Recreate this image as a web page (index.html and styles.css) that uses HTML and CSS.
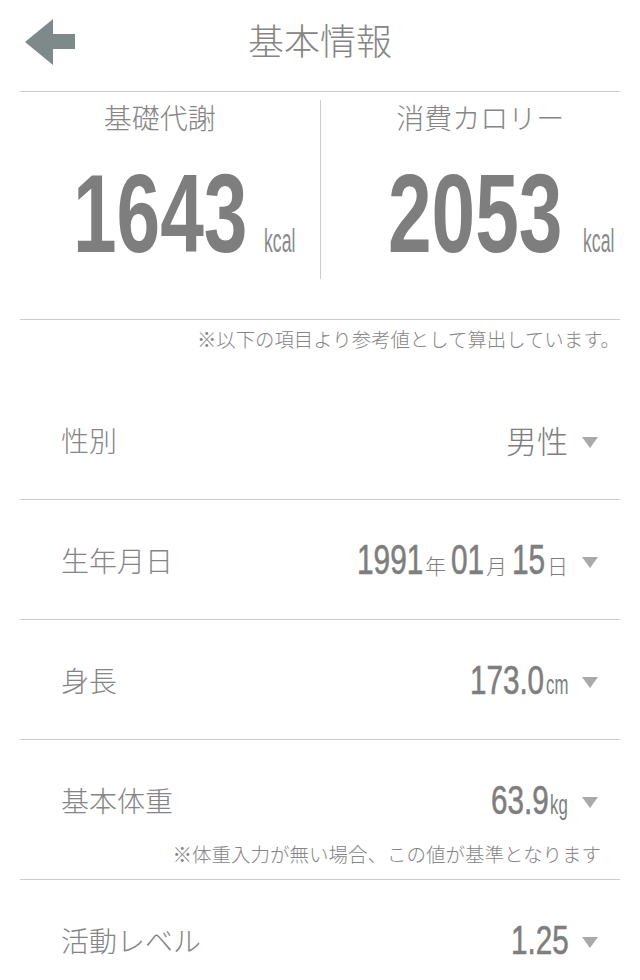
FILE: index.html
```html
<!DOCTYPE html>
<html lang="ja">
<head>
<meta charset="utf-8">
<title>基本情報</title>
<link rel="stylesheet" href="styles.css">
</head>
<body>
<div class="page">
  <header class="header">
    <a class="back" href="#" aria-label="戻る">
      <svg class="back-icon" width="50" height="46" viewBox="0 0 50 46"><polygon points="0,23 28,0 28,15 50,15 50,30 28,30 28,46" fill="#7e8a8a"/></svg>
    </a>
    <h1 class="title">基本情報</h1>
    <span class="header-spacer"></span>
  </header>

  <section class="stats">
    <div class="stat stat-left">
      <div class="stat-label">基礎代謝</div>
      <div class="figure">
        <span class="big"><span class="sq">1643</span></span>
        <span class="kcal"><span class="sq">kcal</span></span>
      </div>
    </div>
    <div class="stat stat-right">
      <div class="stat-label">消費カロリー</div>
      <div class="figure">
        <span class="big"><span class="sq">2053</span></span>
        <span class="kcal"><span class="sq">kcal</span></span>
      </div>
    </div>
  </section>

  <p class="note">※以下の項目より参考値として算出しています。</p>

  <div class="rows">
    <div class="row">
      <div class="line">
        <span class="label">性別</span>
        <span class="val">
          <span class="val-text"><span class="jp-val">男性</span></span>
          <span class="caret"></span>
        </span>
      </div>
    </div>

    <div class="row">
      <div class="line">
        <span class="label">生年月日</span>
        <span class="val">
          <span class="val-text">
            <span class="dnum w-4d"><span class="sq">1991</span></span><span class="jp-unit">年</span><span class="dnum w-2d"><span class="sq">01</span></span><span class="jp-unit">月</span><span class="dnum w-2d"><span class="sq">15</span></span><span class="jp-unit last">日</span>
          </span>
          <span class="caret"></span>
        </span>
      </div>
    </div>

    <div class="row">
      <div class="line">
        <span class="label">身長</span>
        <span class="val">
          <span class="val-text">
            <span class="num w-4p"><span class="sq">173.0</span></span><span class="unit w-cm"><span class="sq">cm</span></span>
          </span>
          <span class="caret"></span>
        </span>
      </div>
    </div>

    <div class="row row-with-note">
      <div class="line">
        <span class="label">基本体重</span>
        <span class="val">
          <span class="val-text">
            <span class="num w-3p"><span class="sq">63.9</span></span><span class="unit w-kg"><span class="sq">kg</span></span>
          </span>
          <span class="caret"></span>
        </span>
      </div>
      <p class="row-note">※体重入力が無い場合、この値が基準となります</p>
    </div>

    <div class="row">
      <div class="line">
        <span class="label">活動レベル</span>
        <span class="val">
          <span class="val-text">
            <span class="num w-3p"><span class="sq">1.25</span></span>
          </span>
          <span class="caret"></span>
        </span>
      </div>
    </div>
  </div>
</div>
</body>
</html>
```

FILE: styles.css
```css
* { box-sizing: border-box; }

html, body {
  margin: 0;
  padding: 0;
  background: #ffffff;
}

body {
  font-family: "Noto Sans CJK JP", "Noto Sans", sans-serif;
  font-weight: 300;
  color: #808080;
  overflow: hidden;
}

.page {
  width: 640px;
  padding: 0 20px;
}

/* Header */
.header {
  display: grid;
  grid-template-columns: 1fr auto 1fr;
  align-items: center;
  height: 92px;
  padding-bottom: 8px;
  border-bottom: 1px solid #cccccc;
}

.back {
  display: flex;
  margin-left: 5px;
  width: 50px;
  height: 46px;
}

.back-icon { display: block; }

.title {
  margin: 0 0 5px;
  font-size: 36px;
  line-height: 40px;
  font-weight: 300;
  color: #858585;
  letter-spacing: 0;
}

/* Stats */
.stats {
  display: flex;
  padding: 8px 0 40px;
  border-bottom: 1px solid #cccccc;
}

.stat {
  flex: 1 1 0;
  height: 179px;
  padding-top: 3px;
}

.stat-left { padding-right: 20px; }

.stat-right {
  padding-left: 20px;
  border-left: 1px solid #cccccc;
}

.stat-label {
  text-align: center;
  font-size: 28px;
  line-height: 28px;
  color: #858585;
}

.figure {
  display: flex;
  align-items: baseline;
  gap: 21px;
  margin-top: 27px;
}

.stat-left .figure { padding-left: 53px; gap: 17px; }
.stat-right .figure { padding-left: 47px; }

.sq {
  display: inline-block;
  white-space: nowrap;
  transform-origin: 0 50%;
}

.big {
  display: inline-block;
  width: 174px;
  font-family: "Liberation Sans", Arial, sans-serif;
  font-weight: 700;
  font-size: 112px;
  line-height: 112px;
  color: #7e7e7e;
}

.big .sq { transform: scaleX(0.7); }

.kcal {
  display: inline-block;
  width: 31px;
  font-family: "Liberation Sans", Arial, sans-serif;
  font-weight: 400;
  font-size: 34px;
  line-height: 34px;
  color: #8a8a8a;
}

.kcal .sq { transform: scaleX(0.52); }

/* Note */
.note {
  margin: 0;
  height: 60px;
  padding-top: 9px;
  text-align: right;
  font-size: 19.4px;
  line-height: 20px;
  color: #858585;
  white-space: nowrap;
}

/* Rows */
.row {
  padding: 40px 0 39px;
  border-bottom: 1px solid #cccccc;
}

.row-with-note { padding-bottom: 13px; }

.line {
  display: flex;
  justify-content: space-between;
  align-items: center;
  height: 40px;
  padding: 0 22px 0 41px;
}

.label {
  font-size: 28px;
  line-height: 40px;
  color: #858585;
  white-space: nowrap;
}

.val {
  display: flex;
  align-items: center;
  gap: 14px;
}

.val-text {
  display: flex;
  align-items: baseline;
  line-height: 40px;
  white-space: nowrap;
}

.jp-val {
  font-size: 31px;
  line-height: 40px;
  color: #7e7e7e;
}

.num, .dnum, .unit {
  display: inline-block;
  font-family: "Liberation Sans", Arial, sans-serif;
  color: #7e7e7e;
}

.num {
  font-weight: 400;
  font-size: 40px;
  line-height: 40px;
  -webkit-text-stroke: 0.6px #7e7e7e;
}

.num .sq { transform: scaleX(0.74); }

.dnum {
  font-weight: 400;
  font-size: 42px;
  line-height: 40px;
  -webkit-text-stroke: 0.6px #7e7e7e;
}

.dnum .sq { transform: scaleX(0.71); }

.unit {
  font-weight: 400;
  font-size: 28px;
  line-height: 28px;
  margin-left: 2px;
}

.unit .sq { transform: scaleX(0.6); }

.w-4p { width: 74px; }
.w-3p { width: 57px; }
.w-4d { width: 66px; }
.w-2d { width: 33px; }
.w-cm { width: 22px; }
.w-kg { width: 18px; }

.jp-unit {
  font-size: 21px;
  line-height: 24px;
  color: #7e7e7e;
  margin: 0 5px 0 2px;
}

.jp-unit.last { margin-right: 0; }

.caret {
  width: 0;
  height: 0;
  margin-top: 4px;
  border-left: 8px solid transparent;
  border-right: 8px solid transparent;
  border-top: 11px solid #a9a9a9;
}

.row-note {
  margin: 22px 0 0;
  padding-right: 19px;
  text-align: right;
  font-size: 19.5px;
  line-height: 24px;
  color: #858585;
  white-space: nowrap;
}
```
